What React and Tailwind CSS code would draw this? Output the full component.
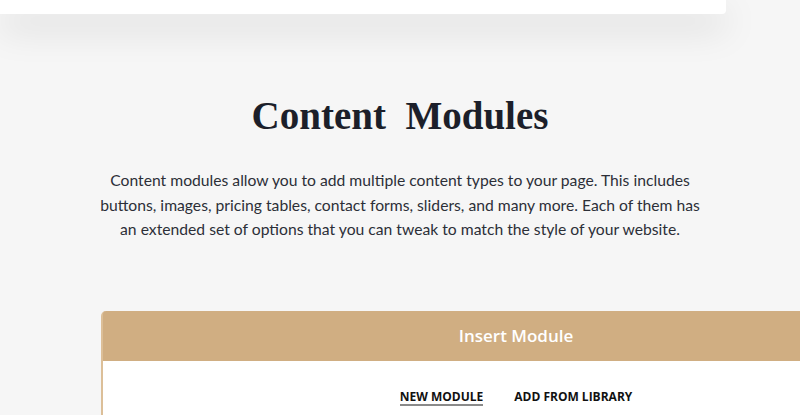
import React, { useState } from 'react';

const tabs = ['New Module', 'Add From Library'];

const App = () => {
  const [tab, setTab] = useState(0);

  return (
    <div className="w-[800px] h-[415px] overflow-hidden bg-[#f6f6f6]">
      {/* top card peeking in */}
      <div className="w-[726px] h-[14px] bg-white rounded-br-[4px] shadow-[0_14px_36px_rgba(0,0,0,0.15)]" />

      <h2 className="mt-[78px] text-center text-[39px] leading-[48px] font-bold text-[#1c1f2a] font-['Liberation_Serif',serif] whitespace-pre">
        Content  Modules
      </h2>

      <p className="mt-[28px] mx-auto w-[620px] text-center text-[15.7px] leading-[24.5px] text-[#2c2f38] font-['Lato',sans-serif]">
        Content modules allow you to add multiple content types to your page. This includes buttons, images, pricing tables, contact forms, sliders, and many more. Each of them has an extended set of options that you can tweak to match the style of your website.
      </p>

      {/* Insert module dialog */}
      <div className="mt-[69px] ml-[101px] w-[828px] rounded-t-[5px] border-l-2 border-solid border-[#dcbf98] bg-white">
        <div className="h-[50px] rounded-tl-[3px] bg-[#d0ae82] flex items-center justify-center">
          <span className="text-white text-[17px] font-semibold font-['Open_Sans',sans-serif]">Insert Module</span>
        </div>
        <div className="h-[120px] pt-[28px] flex justify-center items-start gap-[31px]">
          {tabs.map((t, i) => (
            <button
              key={t}
              onClick={() => setTab(i)}
              className={`text-[12px] leading-[15px] font-bold uppercase text-[#111] font-['Open_Sans',sans-serif] border-b-2 ${
                tab === i ? 'border-[#8a8a8a]' : 'border-transparent'
              }`}
            >
              {t}
            </button>
          ))}
        </div>
      </div>
    </div>
  );
};

export default App;
